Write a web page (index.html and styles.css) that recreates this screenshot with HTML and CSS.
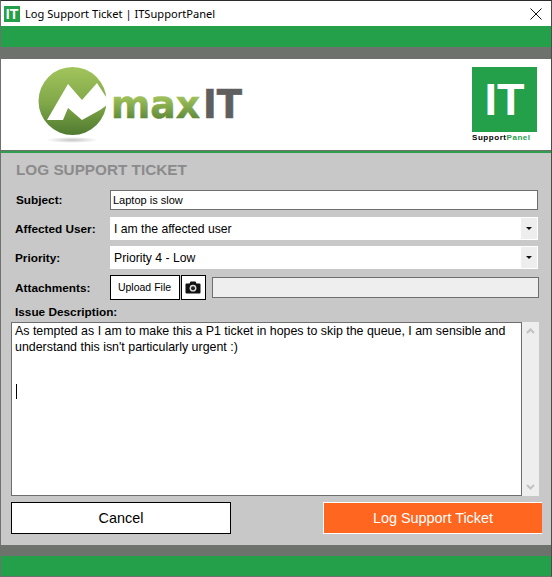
FILE: index.html
```html
<!DOCTYPE html>
<html lang="en">
<head>
    <meta charset="UTF-8">
    <meta name="viewport" content="width=device-width, initial-scale=1.0">
    <title>Log Support Ticket | ITSupportPanel</title>
    <link rel="stylesheet" href="styles.css">
</head>
<body>
    <div class="window">
        <div class="titlebar">
            <div class="app-icon">IT</div>
            <div class="title-text">Log Support Ticket | ITSupportPanel</div>
            <svg class="close-icon" width="12" height="12" viewBox="0 0 12 12">
                <path d="M0.5 0.5L11.5 11.5M11.5 0.5L0.5 11.5" stroke="#111" stroke-width="1" fill="none"/>
            </svg>
        </div>
        <div class="green-bar"></div>
        <div class="gray-bar"></div>

        <header class="banner">
            <svg class="maxit-logo" width="230" height="84" viewBox="0 0 230 84">
                <defs>
                    <linearGradient id="ball" x1="0" y1="0" x2="0" y2="1">
                        <stop offset="0" stop-color="#a2c45c"/>
                        <stop offset="0.55" stop-color="#7fa648"/>
                        <stop offset="1" stop-color="#4f7a30"/>
                    </linearGradient>
                    <linearGradient id="word" x1="0" y1="0" x2="0" y2="1">
                        <stop offset="0.35" stop-color="#9dc05a"/>
                        <stop offset="0.95" stop-color="#4f7a30"/>
                    </linearGradient>
                    <radialGradient id="shadow">
                        <stop offset="0" stop-color="#c4c4c4"/>
                        <stop offset="1" stop-color="#ffffff"/>
                    </radialGradient>
                </defs>
                <ellipse cx="34" cy="73" rx="26" ry="3" fill="url(#shadow)"/>
                <circle cx="34.5" cy="34" r="34" fill="url(#ball)"/>
                <path d="M9 53L30 17L44 33L59 16L72 36L62 43L44 53L30 41L25 53Z" fill="#fff"/>
                <text x="73" y="51" class="logo-word logo-max" textLength="89" lengthAdjust="spacingAndGlyphs">max</text>
                <text x="165" y="51" class="logo-word logo-it" textLength="39" lengthAdjust="spacingAndGlyphs">IT</text>
            </svg>
            <div class="panel-logo">
                <div class="panel-square">IT</div>
                <div class="panel-name">Support<span class="panel-green">Panel</span></div>
            </div>
        </header>

        <main class="panel">
            <h1 class="heading">LOG SUPPORT TICKET</h1>

            <div class="row row-subject">
                <div class="label">Subject:</div>
                <div class="text-input">Laptop is slow</div>
            </div>
            <div class="row row-select">
                <div class="label">Affected User:</div>
                <div class="select">
                    <span class="select-value">I am the affected user</span>
                    <span class="select-arrow"></span>
                </div>
            </div>
            <div class="row row-select">
                <div class="label">Priority:</div>
                <div class="select">
                    <span class="select-value">Priority 4 - Low</span>
                    <span class="select-arrow"></span>
                </div>
            </div>
            <div class="row row-attach">
                <div class="label">Attachments:</div>
                <div class="upload-btn">Upload File</div>
                <div class="camera-btn">
                    <svg width="16" height="13" viewBox="0 0 16 13">
                        <path d="M1.5 2.5H4.5L5.5 0.5H10.5L11.5 2.5H14.5Q15.5 2.5 15.5 3.5V11.5Q15.5 12.5 14.5 12.5H1.5Q0.5 12.5 0.5 11.5V3.5Q0.5 2.5 1.5 2.5Z" fill="#111"/>
                        <circle cx="8" cy="7.2" r="3.4" fill="#ddd"/>
                        <circle cx="8" cy="7.2" r="2" fill="#222"/>
                    </svg>
                </div>
                <div class="file-name"></div>
            </div>

            <div class="label desc-label">Issue Description:</div>
            <div class="desc-box">
                <div class="textarea">
                    <p class="desc-text">As tempted as I am to make this a P1 ticket in hopes to skip the queue, I am sensible and understand this isn't particularly urgent :)</p>
                    <div class="caret"></div>
                </div>
                <div class="scrollbar">
                    <svg width="9" height="6" viewBox="0 0 9 6"><path d="M1 5L4.5 1.5L8 5" stroke="#c2c2c2" stroke-width="2" fill="none"/></svg>
                    <svg width="9" height="6" viewBox="0 0 9 6"><path d="M1 1L4.5 4.5L8 1" stroke="#c2c2c2" stroke-width="2" fill="none"/></svg>
                </div>
            </div>

            <div class="actions">
                <div class="btn btn-cancel">Cancel</div>
                <div class="btn btn-submit">Log Support Ticket</div>
            </div>
        </main>

        <div class="gray-bar gray-bottom"></div>
        <div class="green-bar green-bottom"></div>
    </div>
</body>
</html>
```

FILE: styles.css
```css
html, body {
    margin: 0;
    padding: 0;
}

body {
    font-family: "Liberation Sans", Arial, sans-serif;
    color: #000;
    background: #6e726c;
}

.window {
    width: 552px;
    height: 577px;
    box-sizing: border-box;
    border-top: 1px solid #2b2b2b;
    border-left: 1px solid #6e726c;
    border-right: 1px solid #4a4a4a;
    border-bottom: 1px solid #6e726c;
    display: flex;
    flex-direction: column;
    overflow: hidden;
}

.titlebar {
    height: 25px;
    flex: none;
    background: #fff;
    display: flex;
    align-items: center;
    padding-left: 3px;
    padding-right: 9px;
}

.app-icon {
    width: 16px;
    height: 16px;
    background: #24a04a;
    color: #fff;
    font-weight: bold;
    font-size: 14px;
    line-height: 16px;
    text-align: center;
}

.title-text {
    font-family: "Noto Sans", sans-serif;
    font-size: 11.1px;
    margin-left: 5px;
    flex: 1;
}

.green-bar {
    height: 21px;
    flex: none;
    background: #24a04a;
}

.gray-bar {
    height: 12px;
    flex: none;
    background: #6e726c;
}

.banner {
    height: 83px;
    flex: none;
    background: #fff;
    border-bottom: 1px solid #6e726c;
    display: flex;
    justify-content: space-between;
    padding: 8px 14px 0 37px;
}

.logo-word {
    font-family: "DejaVu Sans", sans-serif;
    font-weight: bold;
    font-size: 39px;
    stroke-width: 0.6;
}

.logo-max {
    fill: url(#word);
    stroke: url(#word);
}

.logo-it {
    fill: #5f5f5f;
    stroke: #5f5f5f;
}

.panel-logo {
    width: 65px;
}

.panel-square {
    width: 65px;
    height: 65px;
    background: #24a04a;
    color: #fff;
    font-weight: bold;
    font-size: 45px;
    line-height: 65px;
    text-align: center;
}

.panel-name {
    font-size: 8px;
    font-weight: bold;
    letter-spacing: 0.55px;
    line-height: 11px;
    white-space: nowrap;
}

.panel-green {
    color: #24a04a;
}

.panel {
    flex: 1;
    background: #c8c8c8;
    border-top: 2px solid #2f9e50;
    padding: 0 0 0 10px;
}

.heading {
    margin: 8px 0 0 5px;
    font-size: 15.3px;
    line-height: 17px;
    color: #8b8b8b;
    font-weight: bold;
}

.row {
    display: flex;
    align-items: center;
}

.row-subject {
    margin-top: 12px;
    height: 20px;
}

.row-select {
    margin-top: 7px;
    height: 23px;
}

.row-select + .row-select {
    margin-top: 6px;
}

.row-attach {
    margin-top: 6px;
    height: 25px;
}

.label {
    width: 95px;
    padding-left: 4px;
    flex: none;
    font-size: 11.8px;
    font-weight: bold;
}

.row-subject .label {
    padding-left: 5px;
    width: 94px;
}

.text-input {
    width: 424px;
    height: 18px;
    line-height: 18px;
    background: #fff;
    border: 1px solid #6e6e6e;
    padding-left: 2px;
    font-size: 11px;
}

.select {
    width: 428px;
    height: 23px;
    background: #fff;
    display: flex;
    align-items: center;
    justify-content: space-between;
    font-size: 12.2px;
    padding-left: 4px;
    box-sizing: border-box;
}

.select-arrow {
    width: 16px;
    height: 21px;
    margin-right: 1px;
    background: #eeeeee;
    position: relative;
}

.select-arrow::after {
    content: "";
    position: absolute;
    left: 5px;
    top: 9px;
    border-left: 3px solid transparent;
    border-right: 3px solid transparent;
    border-top: 3px solid #111;
}

.upload-btn {
    width: 67px;
    height: 23px;
    line-height: 23px;
    text-align: center;
    background: #fff;
    border: 1px solid #000;
    padding-right: 1px;
    font-size: 10.5px;
}

.camera-btn {
    width: 21px;
    height: 23px;
    margin-left: 1px;
    padding-right: 2px;
    background: #fff;
    border: 1px solid #000;
    display: flex;
    align-items: center;
    justify-content: center;
}

.file-name {
    width: 325px;
    height: 19px;
    margin-left: 6px;
    background: #eeeeee;
    border: 1px solid #6e6e6e;
}

.desc-label {
    margin-top: 5px;
    line-height: 15px;
    width: auto;
}

.desc-box {
    display: flex;
    height: 174px;
    margin-top: 2px;
}

.textarea {
    width: 511px;
    box-sizing: border-box;
    background: #fff;
    border: 1px solid #6e6e6e;
    padding: 0 3px;
}

.desc-text {
    margin: 0;
    font-size: 12.4px;
    line-height: 16px;
}

.caret {
    width: 1px;
    height: 15px;
    margin: 29px 0 0 1px;
    background: #000;
}

.scrollbar {
    width: 17px;
    background: #eeeeee;
    display: flex;
    flex-direction: column;
    align-items: center;
    justify-content: space-between;
    padding: 6px 0;
    box-sizing: border-box;
}

.actions {
    display: flex;
    justify-content: space-between;
    margin-top: 6px;
    height: 32px;
}

.btn {
    box-sizing: border-box;
    height: 32px;
    width: 220px;
    line-height: 31px;
    text-align: center;
    font-size: 14.4px;
}

.btn-cancel {
    background: #fff;
    border: 1px solid #000;
}

.btn-submit {
    width: 219px;
    margin-right: 9px;
    background: #ff6720;
    color: #fff;
    border: 1px solid #fff;
    border-right: none;
}

.gray-bottom {
    height: 11px;
}

.green-bottom {
    height: 20px;
}
```
